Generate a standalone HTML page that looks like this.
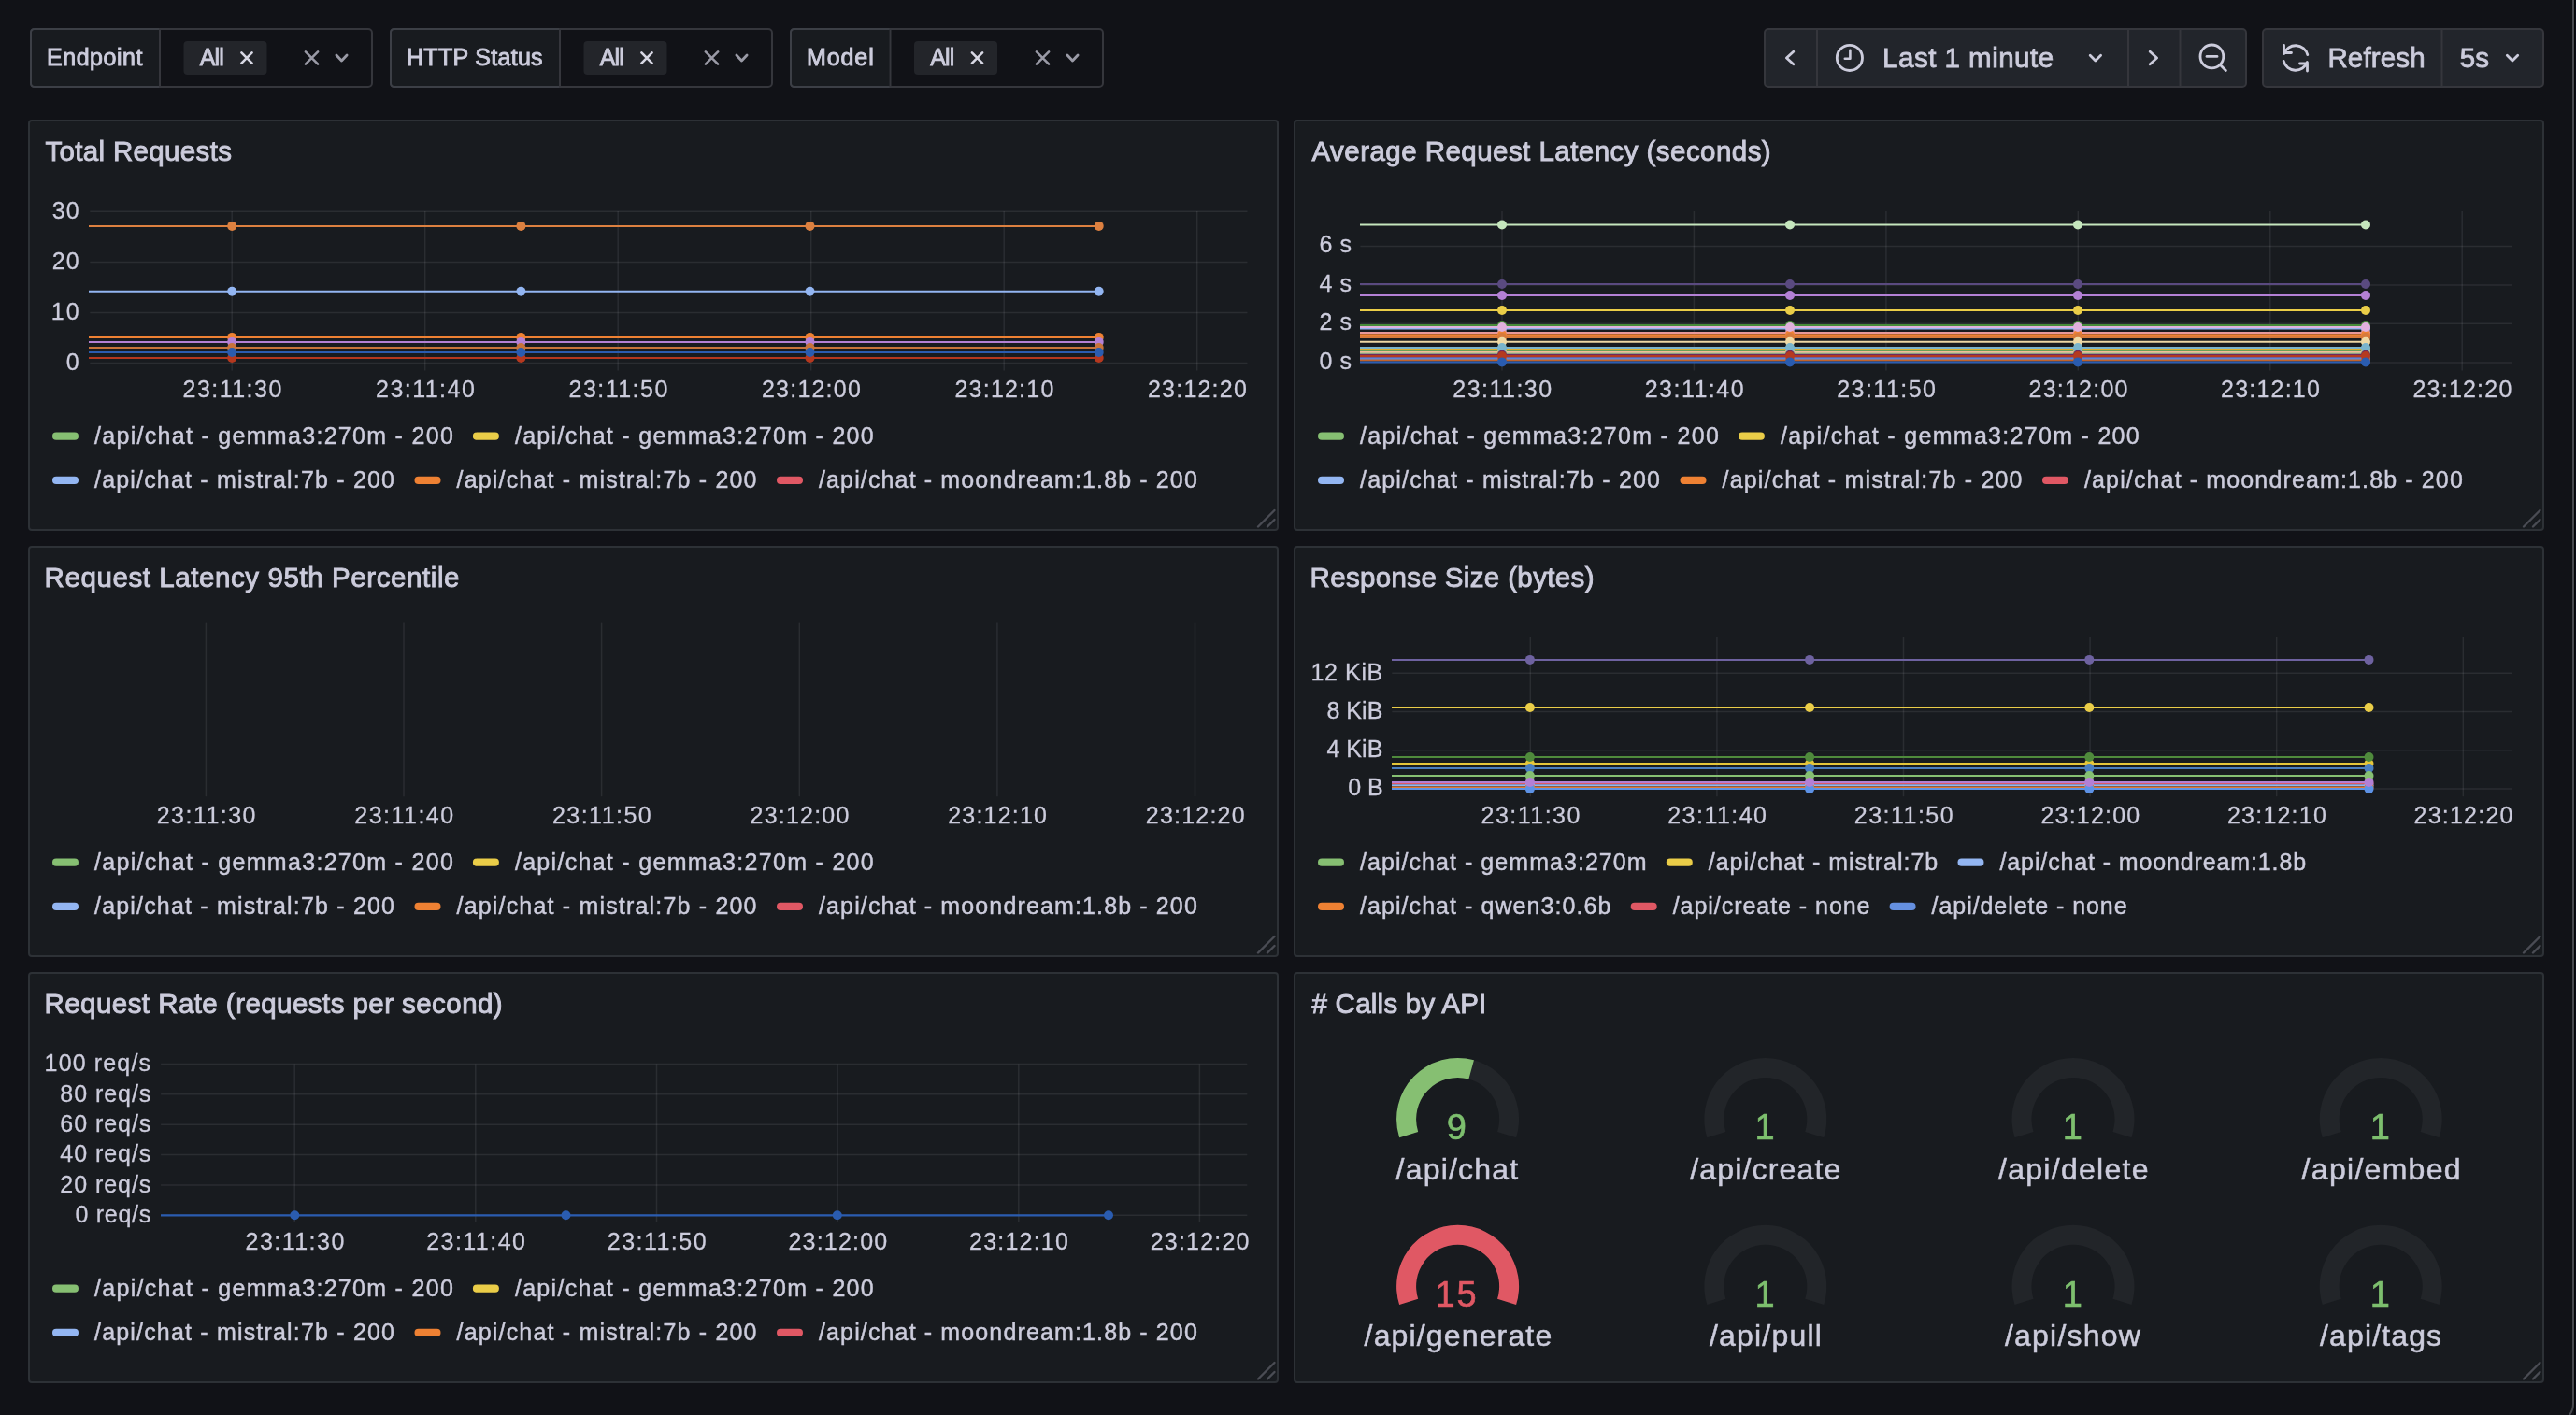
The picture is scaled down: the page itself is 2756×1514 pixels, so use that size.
<!DOCTYPE html><html><head><meta charset="utf-8"><title>Grafana</title><style>
html,body{margin:0;padding:0;width:2756px;height:1514px;overflow:hidden;background:#111217;}
svg{position:absolute;left:0;top:0;display:block;font-family:"Liberation Sans",sans-serif;will-change:transform;}
text{white-space:pre;}
</style></head><body>
<svg width="2756" height="1514" viewBox="0 0 2756 1514">
<rect x="33" y="31" width="365" height="62" fill="#111217" stroke="#35363c" stroke-width="2" rx="4" />
<path d="M37 32 H170 V92 H37 Q34 92 34 89 V35 Q34 32 37 32 Z" fill="#181b1f"/>
<path d="M170 31 H37 Q33 31 33 35 V89 Q33 93 37 93 H170" fill="none" stroke="#3c3f46" stroke-width="2"/>
<line x1="171.0" y1="31.0" x2="171.0" y2="93.0" stroke="#35363c" stroke-width="2" />
<text x="50.00" y="70.2" font-size="25" fill="#ccccdc" stroke="#ccccdc" stroke-width="0.9" textLength="102.40" lengthAdjust="spacing">Endpoint</text>
<rect x="196.5" y="44" width="89" height="36" fill="#23252a" stroke="none" stroke-width="0" rx="4" />
<text x="213.70" y="70.3" font-size="25" fill="#ccccdc" stroke="#ccccdc" stroke-width="0.8" textLength="26.00" lengthAdjust="spacing">All</text>
<path d="M258.4 56.4 L269.6 67.6 M258.4 67.6 L269.6 56.4" stroke="#d8d8e4" stroke-width="2.6" fill="none" stroke-linecap="round" stroke-linejoin="round"/>
<path d="M326.9 55.4 L340.1 68.6 M326.9 68.6 L340.1 55.4" stroke="#9a9aa6" stroke-width="2.6" fill="none" stroke-linecap="round" stroke-linejoin="round"/>
<path d="M359.9 59.0 L365.5 65.0 L371.1 59.0" stroke="#9a9aa6" stroke-width="2.8" fill="none" stroke-linecap="round" stroke-linejoin="round"/>
<rect x="418" y="31" width="408" height="62" fill="#111217" stroke="#35363c" stroke-width="2" rx="4" />
<path d="M422 32 H598 V92 H422 Q419 92 419 89 V35 Q419 32 422 32 Z" fill="#181b1f"/>
<path d="M598 31 H422 Q418 31 418 35 V89 Q418 93 422 93 H598" fill="none" stroke="#3c3f46" stroke-width="2"/>
<line x1="599.0" y1="31.0" x2="599.0" y2="93.0" stroke="#35363c" stroke-width="2" />
<text x="435.00" y="70.2" font-size="25" fill="#ccccdc" stroke="#ccccdc" stroke-width="0.9" textLength="145.60" lengthAdjust="spacing">HTTP Status</text>
<rect x="624.5" y="44" width="89" height="36" fill="#23252a" stroke="none" stroke-width="0" rx="4" />
<text x="641.70" y="70.3" font-size="25" fill="#ccccdc" stroke="#ccccdc" stroke-width="0.8" textLength="26.00" lengthAdjust="spacing">All</text>
<path d="M686.4 56.4 L697.6 67.6 M686.4 67.6 L697.6 56.4" stroke="#d8d8e4" stroke-width="2.6" fill="none" stroke-linecap="round" stroke-linejoin="round"/>
<path d="M754.9 55.4 L768.1 68.6 M754.9 68.6 L768.1 55.4" stroke="#9a9aa6" stroke-width="2.6" fill="none" stroke-linecap="round" stroke-linejoin="round"/>
<path d="M787.9 59.0 L793.5 65.0 L799.1 59.0" stroke="#9a9aa6" stroke-width="2.8" fill="none" stroke-linecap="round" stroke-linejoin="round"/>
<rect x="846" y="31" width="334" height="62" fill="#111217" stroke="#35363c" stroke-width="2" rx="4" />
<path d="M850 32 H951.5 V92 H850 Q847 92 847 89 V35 Q847 32 850 32 Z" fill="#181b1f"/>
<path d="M951.5 31 H850 Q846 31 846 35 V89 Q846 93 850 93 H951.5" fill="none" stroke="#3c3f46" stroke-width="2"/>
<line x1="952.5" y1="31.0" x2="952.5" y2="93.0" stroke="#35363c" stroke-width="2" />
<text x="863.10" y="70.2" font-size="25" fill="#ccccdc" stroke="#ccccdc" stroke-width="0.9" textLength="71.60" lengthAdjust="spacing">Model</text>
<rect x="978.0" y="44" width="89" height="36" fill="#23252a" stroke="none" stroke-width="0" rx="4" />
<text x="995.20" y="70.3" font-size="25" fill="#ccccdc" stroke="#ccccdc" stroke-width="0.8" textLength="26.00" lengthAdjust="spacing">All</text>
<path d="M1039.9 56.4 L1051.1 67.6 M1039.9 67.6 L1051.1 56.4" stroke="#d8d8e4" stroke-width="2.6" fill="none" stroke-linecap="round" stroke-linejoin="round"/>
<path d="M1108.9 55.4 L1122.1 68.6 M1108.9 68.6 L1122.1 55.4" stroke="#9a9aa6" stroke-width="2.6" fill="none" stroke-linecap="round" stroke-linejoin="round"/>
<path d="M1141.9 59.0 L1147.5 65.0 L1153.1 59.0" stroke="#9a9aa6" stroke-width="2.8" fill="none" stroke-linecap="round" stroke-linejoin="round"/>
<rect x="1888" y="31" width="515" height="62" fill="#22252b" stroke="#35363c" stroke-width="2" rx="4" />
<line x1="1944.0" y1="31.0" x2="1944.0" y2="93.0" stroke="#35363c" stroke-width="2" />
<line x1="2277.0" y1="31.0" x2="2277.0" y2="93.0" stroke="#35363c" stroke-width="2" />
<line x1="2332.5" y1="31.0" x2="2332.5" y2="93.0" stroke="#35363c" stroke-width="2" />
<path d="M1918.8 55.2 L1911.4 62 L1918.8 68.8" stroke="#ccccdc" stroke-width="2.8" fill="none" stroke-linecap="round" stroke-linejoin="round"/>
<circle cx="1978.9" cy="61.9" r="13.6" fill="none" stroke="#ccccdc" stroke-width="2.8"/>
<path d="M1979.4 53.8 V62.8 H1973.8" stroke="#ccccdc" stroke-width="2.6" fill="none" stroke-linecap="round" stroke-linejoin="round"/>
<text x="2014.10" y="72.4" font-size="29.5" fill="#ccccdc" stroke="#ccccdc" stroke-width="0.8" textLength="183.00" lengthAdjust="spacing">Last 1 minute</text>
<path d="M2236.2 59.3 L2241.9 64.9 L2247.6 59.3" stroke="#ccccdc" stroke-width="2.8" fill="none" stroke-linecap="round" stroke-linejoin="round"/>
<path d="M2300.2 55.2 L2307.6 62 L2300.2 68.8" stroke="#ccccdc" stroke-width="2.8" fill="none" stroke-linecap="round" stroke-linejoin="round"/>
<circle cx="2366.4" cy="60.4" r="12.4" fill="none" stroke="#ccccdc" stroke-width="2.8"/>
<line x1="2375.2" y1="69.2" x2="2381.4" y2="75.4" stroke="#ccccdc" stroke-width="2.8" stroke-linecap="round"/>
<line x1="2361.0" y1="60.4" x2="2372.0" y2="60.4" stroke="#ccccdc" stroke-width="2.8" stroke-linecap="round"/>
<rect x="2421" y="31" width="300" height="62" fill="#22252b" stroke="#35363c" stroke-width="2" rx="4" />
<line x1="2612.5" y1="31.0" x2="2612.5" y2="93.0" stroke="#35363c" stroke-width="2" />
<path d="M2443.6 57.5 A13.2 13.2 0 0 1 2468.8 58.6" stroke="#ccccdc" stroke-width="2.8" fill="none" stroke-linecap="round"/>
<path d="M2468.4 66.5 A13.2 13.2 0 0 1 2443.2 65.4" stroke="#ccccdc" stroke-width="2.8" fill="none" stroke-linecap="round"/>
<path d="M2443.5 48.5 V56.5 H2451.5" stroke="#ccccdc" stroke-width="2.8" fill="none" stroke-linecap="round" stroke-linejoin="round"/>
<path d="M2468.5 76 V68 H2460.5" stroke="#ccccdc" stroke-width="2.8" fill="none" stroke-linecap="round" stroke-linejoin="round"/>
<text x="2490.40" y="72.2" font-size="29.5" fill="#ccccdc" stroke="#ccccdc" stroke-width="0.8" textLength="104.20" lengthAdjust="spacing">Refresh</text>
<text x="2631.70" y="72.2" font-size="29.5" fill="#ccccdc" stroke="#ccccdc" stroke-width="0.8" textLength="31.20" lengthAdjust="spacing">5s</text>
<path d="M2682.3 59.3 L2688.0 64.9 L2693.7 59.3" stroke="#ccccdc" stroke-width="2.8" fill="none" stroke-linecap="round" stroke-linejoin="round"/>
<path d="M2753 0 V1502 A20 20 0 0 1 2733 1522" stroke="#46474d" stroke-width="2" fill="none" />
<rect x="2754" y="0" width="1" height="1514" fill="#050608" stroke="none" stroke-width="0" rx="0" />
<rect x="2755" y="0" width="1" height="1514" fill="#0b0c18" stroke="none" stroke-width="0" rx="0" />
<rect x="31" y="129" width="1336" height="438" fill="#181b1f" stroke="#2d3136" stroke-width="2" rx="3" />
<text x="48.50" y="172.1" font-size="29.5" fill="#ccccdc" stroke="#ccccdc" stroke-width="0.9" textLength="199.40" lengthAdjust="spacing">Total Requests</text>
<line x1="1346.0" y1="563.5" x2="1363.5" y2="546.0" stroke="#4a4c54" stroke-width="2.4" stroke-linecap="round"/>
<line x1="1356.0" y1="563.5" x2="1363.5" y2="556.0" stroke="#4a4c54" stroke-width="2.4" stroke-linecap="round"/>
<line x1="96.3" y1="226.3" x2="1334.5" y2="226.3" stroke="rgba(204,204,220,0.10)" stroke-width="1.5" />
<text x="55.80" y="233.6" font-size="25" fill="#ccccdc" stroke="#ccccdc" stroke-width="0.3" textLength="28.80" lengthAdjust="spacing">30</text>
<line x1="96.3" y1="280.4" x2="1334.5" y2="280.4" stroke="rgba(204,204,220,0.10)" stroke-width="1.5" />
<text x="55.80" y="287.7" font-size="25" fill="#ccccdc" stroke="#ccccdc" stroke-width="0.3" textLength="28.80" lengthAdjust="spacing">20</text>
<line x1="96.3" y1="334.6" x2="1334.5" y2="334.6" stroke="rgba(204,204,220,0.10)" stroke-width="1.5" />
<text x="54.80" y="341.9" font-size="25" fill="#ccccdc" stroke="#ccccdc" stroke-width="0.3" textLength="29.80" lengthAdjust="spacing">10</text>
<line x1="96.3" y1="388.4" x2="1334.5" y2="388.4" stroke="rgba(204,204,220,0.10)" stroke-width="1.5" />
<text x="70.80" y="395.7" font-size="25" fill="#ccccdc" stroke="#ccccdc" stroke-width="0.3" textLength="13.80" lengthAdjust="spacing">0</text>
<line x1="248.2" y1="226.0" x2="248.2" y2="396.5" stroke="rgba(204,204,220,0.10)" stroke-width="1.5" />
<text x="195.50" y="425.0" font-size="25" fill="#ccccdc" stroke="#ccccdc" stroke-width="0.3" textLength="105.80" lengthAdjust="spacing">23:11:30</text>
<line x1="454.7" y1="226.0" x2="454.7" y2="396.5" stroke="rgba(204,204,220,0.10)" stroke-width="1.5" />
<text x="402.00" y="425.0" font-size="25" fill="#ccccdc" stroke="#ccccdc" stroke-width="0.3" textLength="105.80" lengthAdjust="spacing">23:11:40</text>
<line x1="661.2" y1="226.0" x2="661.2" y2="396.5" stroke="rgba(204,204,220,0.10)" stroke-width="1.5" />
<text x="608.50" y="425.0" font-size="25" fill="#ccccdc" stroke="#ccccdc" stroke-width="0.3" textLength="105.80" lengthAdjust="spacing">23:11:50</text>
<line x1="867.7" y1="226.0" x2="867.7" y2="396.5" stroke="rgba(204,204,220,0.10)" stroke-width="1.5" />
<text x="815.00" y="425.0" font-size="25" fill="#ccccdc" stroke="#ccccdc" stroke-width="0.3" textLength="105.80" lengthAdjust="spacing">23:12:00</text>
<line x1="1074.2" y1="226.0" x2="1074.2" y2="396.5" stroke="rgba(204,204,220,0.10)" stroke-width="1.5" />
<text x="1021.50" y="425.0" font-size="25" fill="#ccccdc" stroke="#ccccdc" stroke-width="0.3" textLength="105.80" lengthAdjust="spacing">23:12:10</text>
<line x1="1280.7" y1="226.0" x2="1280.7" y2="396.5" stroke="rgba(204,204,220,0.10)" stroke-width="1.5" />
<text x="1228.00" y="425.0" font-size="25" fill="#ccccdc" stroke="#ccccdc" stroke-width="0.3" textLength="105.80" lengthAdjust="spacing">23:12:20</text>
<line x1="95.0" y1="241.9" x2="1175.7" y2="241.9" stroke="#dc8040" stroke-width="2" />
<circle cx="248.2" cy="241.9" r="5" fill="#dc8040"/>
<circle cx="557.4" cy="241.9" r="5" fill="#dc8040"/>
<circle cx="866.5" cy="241.9" r="5" fill="#dc8040"/>
<circle cx="1175.7" cy="241.9" r="5" fill="#dc8040"/>
<line x1="95.0" y1="311.7" x2="1175.7" y2="311.7" stroke="#93b6f2" stroke-width="2" />
<circle cx="248.2" cy="311.7" r="5" fill="#93b6f2"/>
<circle cx="557.4" cy="311.7" r="5" fill="#93b6f2"/>
<circle cx="866.5" cy="311.7" r="5" fill="#93b6f2"/>
<circle cx="1175.7" cy="311.7" r="5" fill="#93b6f2"/>
<line x1="95.0" y1="360.9" x2="1175.7" y2="360.9" stroke="#ee8133" stroke-width="2" />
<circle cx="248.2" cy="360.9" r="5" fill="#ee8133"/>
<circle cx="557.4" cy="360.9" r="5" fill="#ee8133"/>
<circle cx="866.5" cy="360.9" r="5" fill="#ee8133"/>
<circle cx="1175.7" cy="360.9" r="5" fill="#ee8133"/>
<line x1="95.0" y1="365.9" x2="1175.7" y2="365.9" stroke="#b380d5" stroke-width="2" />
<circle cx="248.2" cy="365.9" r="5" fill="#b380d5"/>
<circle cx="557.4" cy="365.9" r="5" fill="#b380d5"/>
<circle cx="866.5" cy="365.9" r="5" fill="#b380d5"/>
<circle cx="1175.7" cy="365.9" r="5" fill="#b380d5"/>
<line x1="95.0" y1="372.0" x2="1175.7" y2="372.0" stroke="#c8733a" stroke-width="2" />
<circle cx="248.2" cy="372.0" r="5" fill="#c8733a"/>
<circle cx="557.4" cy="372.0" r="5" fill="#c8733a"/>
<circle cx="866.5" cy="372.0" r="5" fill="#c8733a"/>
<circle cx="1175.7" cy="372.0" r="5" fill="#c8733a"/>
<line x1="95.0" y1="383.0" x2="1175.7" y2="383.0" stroke="#b5381f" stroke-width="2" />
<circle cx="248.2" cy="383.0" r="5" fill="#b5381f"/>
<circle cx="557.4" cy="383.0" r="5" fill="#b5381f"/>
<circle cx="866.5" cy="383.0" r="5" fill="#b5381f"/>
<circle cx="1175.7" cy="383.0" r="5" fill="#b5381f"/>
<line x1="95.0" y1="377.0" x2="1175.7" y2="377.0" stroke="#2a5cb0" stroke-width="2" />
<circle cx="248.2" cy="377.0" r="5" fill="#2a5cb0"/>
<circle cx="557.4" cy="377.0" r="5" fill="#2a5cb0"/>
<circle cx="866.5" cy="377.0" r="5" fill="#2a5cb0"/>
<circle cx="1175.7" cy="377.0" r="5" fill="#2a5cb0"/>
<rect x="56" y="462.6" width="28" height="8.2" fill="#86bf72" stroke="none" stroke-width="0" rx="4.1" />
<text x="101.00" y="474.8" font-size="25" fill="#ccccdc" stroke="#ccccdc" stroke-width="0.45" textLength="383.80" lengthAdjust="spacing">/api/chat - gemma3:270m - 200</text>
<rect x="505.9" y="462.6" width="28" height="8.2" fill="#eacd48" stroke="none" stroke-width="0" rx="4.1" />
<text x="550.90" y="474.8" font-size="25" fill="#ccccdc" stroke="#ccccdc" stroke-width="0.45" textLength="383.80" lengthAdjust="spacing">/api/chat - gemma3:270m - 200</text>
<rect x="56" y="509.8" width="28" height="8.2" fill="#93b6f2" stroke="none" stroke-width="0" rx="4.1" />
<text x="101.00" y="522.0" font-size="25" fill="#ccccdc" stroke="#ccccdc" stroke-width="0.45" textLength="321.00" lengthAdjust="spacing">/api/chat - mistral:7b - 200</text>
<rect x="443.5" y="509.8" width="28" height="8.2" fill="#ee8133" stroke="none" stroke-width="0" rx="4.1" />
<text x="488.50" y="522.0" font-size="25" fill="#ccccdc" stroke="#ccccdc" stroke-width="0.45" textLength="321.00" lengthAdjust="spacing">/api/chat - mistral:7b - 200</text>
<rect x="831.0" y="509.8" width="28" height="8.2" fill="#e05864" stroke="none" stroke-width="0" rx="4.1" />
<text x="876.00" y="522.0" font-size="25" fill="#ccccdc" stroke="#ccccdc" stroke-width="0.45" textLength="404.80" lengthAdjust="spacing">/api/chat - moondream:1.8b - 200</text>
<rect x="1385" y="129" width="1336" height="438" fill="#181b1f" stroke="#2d3136" stroke-width="2" rx="3" />
<text x="1403.50" y="172.1" font-size="29.5" fill="#ccccdc" stroke="#ccccdc" stroke-width="0.9" textLength="491.20" lengthAdjust="spacing">Average Request Latency (seconds)</text>
<line x1="2700.0" y1="563.5" x2="2717.5" y2="546.0" stroke="#4a4c54" stroke-width="2.4" stroke-linecap="round"/>
<line x1="2710.0" y1="563.5" x2="2717.5" y2="556.0" stroke="#4a4c54" stroke-width="2.4" stroke-linecap="round"/>
<line x1="1455.4" y1="263.5" x2="2687.6" y2="263.5" stroke="rgba(204,204,220,0.10)" stroke-width="1.5" />
<text x="1411.50" y="270.1" font-size="25" fill="#ccccdc" stroke="#ccccdc" stroke-width="0.3" textLength="34.40" lengthAdjust="spacing">6 s</text>
<line x1="1455.4" y1="305.0" x2="2687.6" y2="305.0" stroke="rgba(204,204,220,0.10)" stroke-width="1.5" />
<text x="1411.50" y="311.6" font-size="25" fill="#ccccdc" stroke="#ccccdc" stroke-width="0.3" textLength="34.40" lengthAdjust="spacing">4 s</text>
<line x1="1455.4" y1="346.2" x2="2687.6" y2="346.2" stroke="rgba(204,204,220,0.10)" stroke-width="1.5" />
<text x="1411.50" y="352.8" font-size="25" fill="#ccccdc" stroke="#ccccdc" stroke-width="0.3" textLength="34.40" lengthAdjust="spacing">2 s</text>
<line x1="1455.4" y1="388.0" x2="2687.6" y2="388.0" stroke="rgba(204,204,220,0.10)" stroke-width="1.5" />
<text x="1411.50" y="394.6" font-size="25" fill="#ccccdc" stroke="#ccccdc" stroke-width="0.3" textLength="34.40" lengthAdjust="spacing">0 s</text>
<line x1="1607.0" y1="226.0" x2="1607.0" y2="396.5" stroke="rgba(204,204,220,0.10)" stroke-width="1.5" />
<text x="1554.30" y="425.0" font-size="25" fill="#ccccdc" stroke="#ccccdc" stroke-width="0.3" textLength="105.80" lengthAdjust="spacing">23:11:30</text>
<line x1="1812.4" y1="226.0" x2="1812.4" y2="396.5" stroke="rgba(204,204,220,0.10)" stroke-width="1.5" />
<text x="1759.74" y="425.0" font-size="25" fill="#ccccdc" stroke="#ccccdc" stroke-width="0.3" textLength="105.80" lengthAdjust="spacing">23:11:40</text>
<line x1="2017.9" y1="226.0" x2="2017.9" y2="396.5" stroke="rgba(204,204,220,0.10)" stroke-width="1.5" />
<text x="1965.18" y="425.0" font-size="25" fill="#ccccdc" stroke="#ccccdc" stroke-width="0.3" textLength="105.80" lengthAdjust="spacing">23:11:50</text>
<line x1="2223.3" y1="226.0" x2="2223.3" y2="396.5" stroke="rgba(204,204,220,0.10)" stroke-width="1.5" />
<text x="2170.62" y="425.0" font-size="25" fill="#ccccdc" stroke="#ccccdc" stroke-width="0.3" textLength="105.80" lengthAdjust="spacing">23:12:00</text>
<line x1="2428.8" y1="226.0" x2="2428.8" y2="396.5" stroke="rgba(204,204,220,0.10)" stroke-width="1.5" />
<text x="2376.06" y="425.0" font-size="25" fill="#ccccdc" stroke="#ccccdc" stroke-width="0.3" textLength="105.80" lengthAdjust="spacing">23:12:10</text>
<line x1="2634.2" y1="226.0" x2="2634.2" y2="396.5" stroke="rgba(204,204,220,0.10)" stroke-width="1.5" />
<text x="2581.50" y="425.0" font-size="25" fill="#ccccdc" stroke="#ccccdc" stroke-width="0.3" textLength="105.80" lengthAdjust="spacing">23:12:20</text>
<line x1="1455.0" y1="240.5" x2="2531.0" y2="240.5" stroke="#c5e6bd" stroke-width="2" />
<circle cx="1607.0" cy="240.5" r="5" fill="#c5e6bd"/>
<circle cx="1915.0" cy="240.5" r="5" fill="#c5e6bd"/>
<circle cx="2223.0" cy="240.5" r="5" fill="#c5e6bd"/>
<circle cx="2531.0" cy="240.5" r="5" fill="#c5e6bd"/>
<line x1="1455.0" y1="304.0" x2="2531.0" y2="304.0" stroke="#5a4a80" stroke-width="2" />
<circle cx="1607.0" cy="304.0" r="5" fill="#5a4a80"/>
<circle cx="1915.0" cy="304.0" r="5" fill="#5a4a80"/>
<circle cx="2223.0" cy="304.0" r="5" fill="#5a4a80"/>
<circle cx="2531.0" cy="304.0" r="5" fill="#5a4a80"/>
<line x1="1455.0" y1="316.0" x2="2531.0" y2="316.0" stroke="#b380d5" stroke-width="2" />
<circle cx="1607.0" cy="316.0" r="5" fill="#b380d5"/>
<circle cx="1915.0" cy="316.0" r="5" fill="#b380d5"/>
<circle cx="2223.0" cy="316.0" r="5" fill="#b380d5"/>
<circle cx="2531.0" cy="316.0" r="5" fill="#b380d5"/>
<line x1="1455.0" y1="332.0" x2="2531.0" y2="332.0" stroke="#eacd48" stroke-width="2" />
<circle cx="1607.0" cy="332.0" r="5" fill="#eacd48"/>
<circle cx="1915.0" cy="332.0" r="5" fill="#eacd48"/>
<circle cx="2223.0" cy="332.0" r="5" fill="#eacd48"/>
<circle cx="2531.0" cy="332.0" r="5" fill="#eacd48"/>
<line x1="1455.0" y1="351.6" x2="2531.0" y2="351.6" stroke="#93b6f2" stroke-width="2" />
<circle cx="1607.0" cy="351.6" r="5" fill="#93b6f2"/>
<circle cx="1915.0" cy="351.6" r="5" fill="#93b6f2"/>
<circle cx="2223.0" cy="351.6" r="5" fill="#93b6f2"/>
<circle cx="2531.0" cy="351.6" r="5" fill="#93b6f2"/>
<line x1="1455.0" y1="356.0" x2="2531.0" y2="356.0" stroke="#e8999a" stroke-width="2" />
<circle cx="1607.0" cy="356.0" r="5" fill="#e8999a"/>
<circle cx="1915.0" cy="356.0" r="5" fill="#e8999a"/>
<circle cx="2223.0" cy="356.0" r="5" fill="#e8999a"/>
<circle cx="2531.0" cy="356.0" r="5" fill="#e8999a"/>
<line x1="1455.0" y1="358.2" x2="2531.0" y2="358.2" stroke="#ee8133" stroke-width="2" />
<circle cx="1607.0" cy="358.2" r="5" fill="#ee8133"/>
<circle cx="1915.0" cy="358.2" r="5" fill="#ee8133"/>
<circle cx="2223.0" cy="358.2" r="5" fill="#ee8133"/>
<circle cx="2531.0" cy="358.2" r="5" fill="#ee8133"/>
<line x1="1455.0" y1="348.0" x2="2531.0" y2="348.0" stroke="#468a3a" stroke-width="2" />
<circle cx="1607.0" cy="348.0" r="5" fill="#468a3a"/>
<circle cx="1915.0" cy="348.0" r="5" fill="#468a3a"/>
<circle cx="2223.0" cy="348.0" r="5" fill="#468a3a"/>
<circle cx="2531.0" cy="348.0" r="5" fill="#468a3a"/>
<line x1="1455.0" y1="350.0" x2="2531.0" y2="350.0" stroke="#e0b0dd" stroke-width="2" />
<circle cx="1607.0" cy="350.0" r="5" fill="#e0b0dd"/>
<circle cx="1915.0" cy="350.0" r="5" fill="#e0b0dd"/>
<circle cx="2223.0" cy="350.0" r="5" fill="#e0b0dd"/>
<circle cx="2531.0" cy="350.0" r="5" fill="#e0b0dd"/>
<line x1="1455.0" y1="361.0" x2="2531.0" y2="361.0" stroke="#d77a3c" stroke-width="2" />
<circle cx="1607.0" cy="361.0" r="5" fill="#d77a3c"/>
<circle cx="1915.0" cy="361.0" r="5" fill="#d77a3c"/>
<circle cx="2223.0" cy="361.0" r="5" fill="#d77a3c"/>
<circle cx="2531.0" cy="361.0" r="5" fill="#d77a3c"/>
<line x1="1455.0" y1="374.0" x2="2531.0" y2="374.0" stroke="#dcae2c" stroke-width="2" />
<circle cx="1607.0" cy="374.0" r="5" fill="#dcae2c"/>
<circle cx="1915.0" cy="374.0" r="5" fill="#dcae2c"/>
<circle cx="2223.0" cy="374.0" r="5" fill="#dcae2c"/>
<circle cx="2531.0" cy="374.0" r="5" fill="#dcae2c"/>
<line x1="1455.0" y1="375.5" x2="2531.0" y2="375.5" stroke="#6aa05a" stroke-width="2" />
<circle cx="1607.0" cy="375.5" r="5" fill="#6aa05a"/>
<circle cx="1915.0" cy="375.5" r="5" fill="#6aa05a"/>
<circle cx="2223.0" cy="375.5" r="5" fill="#6aa05a"/>
<circle cx="2531.0" cy="375.5" r="5" fill="#6aa05a"/>
<line x1="1455.0" y1="377.0" x2="2531.0" y2="377.0" stroke="#f0bd98" stroke-width="2" />
<circle cx="1607.0" cy="377.0" r="5" fill="#f0bd98"/>
<circle cx="1915.0" cy="377.0" r="5" fill="#f0bd98"/>
<circle cx="2223.0" cy="377.0" r="5" fill="#f0bd98"/>
<circle cx="2531.0" cy="377.0" r="5" fill="#f0bd98"/>
<line x1="1455.0" y1="378.6" x2="2531.0" y2="378.6" stroke="#9cc38d" stroke-width="2" />
<circle cx="1607.0" cy="378.6" r="5" fill="#9cc38d"/>
<circle cx="1915.0" cy="378.6" r="5" fill="#9cc38d"/>
<circle cx="2223.0" cy="378.6" r="5" fill="#9cc38d"/>
<circle cx="2531.0" cy="378.6" r="5" fill="#9cc38d"/>
<line x1="1455.0" y1="365.8" x2="2531.0" y2="365.8" stroke="#efd9a4" stroke-width="2" />
<circle cx="1607.0" cy="365.8" r="5" fill="#efd9a4"/>
<circle cx="1915.0" cy="365.8" r="5" fill="#efd9a4"/>
<circle cx="2223.0" cy="365.8" r="5" fill="#efd9a4"/>
<circle cx="2531.0" cy="365.8" r="5" fill="#efd9a4"/>
<line x1="1455.0" y1="372.0" x2="2531.0" y2="372.0" stroke="#7ab4cc" stroke-width="2" />
<circle cx="1607.0" cy="372.0" r="5" fill="#7ab4cc"/>
<circle cx="1915.0" cy="372.0" r="5" fill="#7ab4cc"/>
<circle cx="2223.0" cy="372.0" r="5" fill="#7ab4cc"/>
<circle cx="2531.0" cy="372.0" r="5" fill="#7ab4cc"/>
<line x1="1455.0" y1="379.8" x2="2531.0" y2="379.8" stroke="#6d2a60" stroke-width="2" />
<circle cx="1607.0" cy="379.8" r="5" fill="#6d2a60"/>
<circle cx="1915.0" cy="379.8" r="5" fill="#6d2a60"/>
<circle cx="2223.0" cy="379.8" r="5" fill="#6d2a60"/>
<circle cx="2531.0" cy="379.8" r="5" fill="#6d2a60"/>
<line x1="1455.0" y1="383.0" x2="2531.0" y2="383.0" stroke="#6e62a0" stroke-width="2" />
<circle cx="1607.0" cy="383.0" r="5" fill="#6e62a0"/>
<circle cx="1915.0" cy="383.0" r="5" fill="#6e62a0"/>
<circle cx="2223.0" cy="383.0" r="5" fill="#6e62a0"/>
<circle cx="2531.0" cy="383.0" r="5" fill="#6e62a0"/>
<line x1="1455.0" y1="384.3" x2="2531.0" y2="384.3" stroke="#5d92e6" stroke-width="2" />
<circle cx="1607.0" cy="384.3" r="5" fill="#5d92e6"/>
<circle cx="1915.0" cy="384.3" r="5" fill="#5d92e6"/>
<circle cx="2223.0" cy="384.3" r="5" fill="#5d92e6"/>
<circle cx="2531.0" cy="384.3" r="5" fill="#5d92e6"/>
<line x1="1455.0" y1="385.5" x2="2531.0" y2="385.5" stroke="#c0622a" stroke-width="2" />
<circle cx="1607.0" cy="385.5" r="5" fill="#c0622a"/>
<circle cx="1915.0" cy="385.5" r="5" fill="#c0622a"/>
<circle cx="2223.0" cy="385.5" r="5" fill="#c0622a"/>
<circle cx="2531.0" cy="385.5" r="5" fill="#c0622a"/>
<line x1="1455.0" y1="381.0" x2="2531.0" y2="381.0" stroke="#b53a1f" stroke-width="2" />
<circle cx="1607.0" cy="381.0" r="5" fill="#b53a1f"/>
<circle cx="1915.0" cy="381.0" r="5" fill="#b53a1f"/>
<circle cx="2223.0" cy="381.0" r="5" fill="#b53a1f"/>
<circle cx="2531.0" cy="381.0" r="5" fill="#b53a1f"/>
<line x1="1455.0" y1="387.4" x2="2531.0" y2="387.4" stroke="#2a5cb0" stroke-width="2" />
<circle cx="1607.0" cy="387.4" r="5" fill="#2a5cb0"/>
<circle cx="1915.0" cy="387.4" r="5" fill="#2a5cb0"/>
<circle cx="2223.0" cy="387.4" r="5" fill="#2a5cb0"/>
<circle cx="2531.0" cy="387.4" r="5" fill="#2a5cb0"/>
<rect x="1410" y="462.6" width="28" height="8.2" fill="#86bf72" stroke="none" stroke-width="0" rx="4.1" />
<text x="1455.00" y="474.8" font-size="25" fill="#ccccdc" stroke="#ccccdc" stroke-width="0.45" textLength="383.80" lengthAdjust="spacing">/api/chat - gemma3:270m - 200</text>
<rect x="1859.9" y="462.6" width="28" height="8.2" fill="#eacd48" stroke="none" stroke-width="0" rx="4.1" />
<text x="1904.90" y="474.8" font-size="25" fill="#ccccdc" stroke="#ccccdc" stroke-width="0.45" textLength="383.80" lengthAdjust="spacing">/api/chat - gemma3:270m - 200</text>
<rect x="1410" y="509.8" width="28" height="8.2" fill="#93b6f2" stroke="none" stroke-width="0" rx="4.1" />
<text x="1455.00" y="522.0" font-size="25" fill="#ccccdc" stroke="#ccccdc" stroke-width="0.45" textLength="321.00" lengthAdjust="spacing">/api/chat - mistral:7b - 200</text>
<rect x="1797.5" y="509.8" width="28" height="8.2" fill="#ee8133" stroke="none" stroke-width="0" rx="4.1" />
<text x="1842.50" y="522.0" font-size="25" fill="#ccccdc" stroke="#ccccdc" stroke-width="0.45" textLength="321.00" lengthAdjust="spacing">/api/chat - mistral:7b - 200</text>
<rect x="2185.0" y="509.8" width="28" height="8.2" fill="#e05864" stroke="none" stroke-width="0" rx="4.1" />
<text x="2230.00" y="522.0" font-size="25" fill="#ccccdc" stroke="#ccccdc" stroke-width="0.45" textLength="404.80" lengthAdjust="spacing">/api/chat - moondream:1.8b - 200</text>
<rect x="31" y="585" width="1336" height="438" fill="#181b1f" stroke="#2d3136" stroke-width="2" rx="3" />
<text x="47.50" y="628.1" font-size="29.5" fill="#ccccdc" stroke="#ccccdc" stroke-width="0.9" textLength="444.00" lengthAdjust="spacing">Request Latency 95th Percentile</text>
<line x1="1346.0" y1="1019.5" x2="1363.5" y2="1002.0" stroke="#4a4c54" stroke-width="2.4" stroke-linecap="round"/>
<line x1="1356.0" y1="1019.5" x2="1363.5" y2="1012.0" stroke="#4a4c54" stroke-width="2.4" stroke-linecap="round"/>
<line x1="220.4" y1="666.6" x2="220.4" y2="852.2" stroke="rgba(204,204,220,0.10)" stroke-width="1.5" />
<text x="167.70" y="881.0" font-size="25" fill="#ccccdc" stroke="#ccccdc" stroke-width="0.3" textLength="105.80" lengthAdjust="spacing">23:11:30</text>
<line x1="432.0" y1="666.6" x2="432.0" y2="852.2" stroke="rgba(204,204,220,0.10)" stroke-width="1.5" />
<text x="379.32" y="881.0" font-size="25" fill="#ccccdc" stroke="#ccccdc" stroke-width="0.3" textLength="105.80" lengthAdjust="spacing">23:11:40</text>
<line x1="643.6" y1="666.6" x2="643.6" y2="852.2" stroke="rgba(204,204,220,0.10)" stroke-width="1.5" />
<text x="590.94" y="881.0" font-size="25" fill="#ccccdc" stroke="#ccccdc" stroke-width="0.3" textLength="105.80" lengthAdjust="spacing">23:11:50</text>
<line x1="855.3" y1="666.6" x2="855.3" y2="852.2" stroke="rgba(204,204,220,0.10)" stroke-width="1.5" />
<text x="802.56" y="881.0" font-size="25" fill="#ccccdc" stroke="#ccccdc" stroke-width="0.3" textLength="105.80" lengthAdjust="spacing">23:12:00</text>
<line x1="1066.9" y1="666.6" x2="1066.9" y2="852.2" stroke="rgba(204,204,220,0.10)" stroke-width="1.5" />
<text x="1014.18" y="881.0" font-size="25" fill="#ccccdc" stroke="#ccccdc" stroke-width="0.3" textLength="105.80" lengthAdjust="spacing">23:12:10</text>
<line x1="1278.5" y1="666.6" x2="1278.5" y2="852.2" stroke="rgba(204,204,220,0.10)" stroke-width="1.5" />
<text x="1225.80" y="881.0" font-size="25" fill="#ccccdc" stroke="#ccccdc" stroke-width="0.3" textLength="105.80" lengthAdjust="spacing">23:12:20</text>
<rect x="56" y="918.5999999999999" width="28" height="8.2" fill="#86bf72" stroke="none" stroke-width="0" rx="4.1" />
<text x="101.00" y="930.8" font-size="25" fill="#ccccdc" stroke="#ccccdc" stroke-width="0.45" textLength="383.80" lengthAdjust="spacing">/api/chat - gemma3:270m - 200</text>
<rect x="505.9" y="918.5999999999999" width="28" height="8.2" fill="#eacd48" stroke="none" stroke-width="0" rx="4.1" />
<text x="550.90" y="930.8" font-size="25" fill="#ccccdc" stroke="#ccccdc" stroke-width="0.45" textLength="383.80" lengthAdjust="spacing">/api/chat - gemma3:270m - 200</text>
<rect x="56" y="965.8" width="28" height="8.2" fill="#93b6f2" stroke="none" stroke-width="0" rx="4.1" />
<text x="101.00" y="978.0" font-size="25" fill="#ccccdc" stroke="#ccccdc" stroke-width="0.45" textLength="321.00" lengthAdjust="spacing">/api/chat - mistral:7b - 200</text>
<rect x="443.5" y="965.8" width="28" height="8.2" fill="#ee8133" stroke="none" stroke-width="0" rx="4.1" />
<text x="488.50" y="978.0" font-size="25" fill="#ccccdc" stroke="#ccccdc" stroke-width="0.45" textLength="321.00" lengthAdjust="spacing">/api/chat - mistral:7b - 200</text>
<rect x="831.0" y="965.8" width="28" height="8.2" fill="#e05864" stroke="none" stroke-width="0" rx="4.1" />
<text x="876.00" y="978.0" font-size="25" fill="#ccccdc" stroke="#ccccdc" stroke-width="0.45" textLength="404.80" lengthAdjust="spacing">/api/chat - moondream:1.8b - 200</text>
<rect x="1385" y="585" width="1336" height="438" fill="#181b1f" stroke="#2d3136" stroke-width="2" rx="3" />
<text x="1401.50" y="628.1" font-size="29.5" fill="#ccccdc" stroke="#ccccdc" stroke-width="0.9" textLength="304.00" lengthAdjust="spacing">Response Size (bytes)</text>
<line x1="2700.0" y1="1019.5" x2="2717.5" y2="1002.0" stroke="#4a4c54" stroke-width="2.4" stroke-linecap="round"/>
<line x1="2710.0" y1="1019.5" x2="2717.5" y2="1012.0" stroke="#4a4c54" stroke-width="2.4" stroke-linecap="round"/>
<line x1="1489.3" y1="720.2" x2="2687.2" y2="720.2" stroke="rgba(204,204,220,0.10)" stroke-width="1.5" />
<text x="1402.50" y="727.5" font-size="25" fill="#ccccdc" stroke="#ccccdc" stroke-width="0.3" textLength="76.80" lengthAdjust="spacing">12 KiB</text>
<line x1="1489.3" y1="761.4" x2="2687.2" y2="761.4" stroke="rgba(204,204,220,0.10)" stroke-width="1.5" />
<text x="1419.40" y="768.7" font-size="25" fill="#ccccdc" stroke="#ccccdc" stroke-width="0.3" textLength="60.00" lengthAdjust="spacing">8 KiB</text>
<line x1="1489.3" y1="802.7" x2="2687.2" y2="802.7" stroke="rgba(204,204,220,0.10)" stroke-width="1.5" />
<text x="1419.40" y="810.0" font-size="25" fill="#ccccdc" stroke="#ccccdc" stroke-width="0.3" textLength="60.00" lengthAdjust="spacing">4 KiB</text>
<line x1="1489.3" y1="844.0" x2="2687.2" y2="844.0" stroke="rgba(204,204,220,0.10)" stroke-width="1.5" />
<text x="1442.20" y="851.3" font-size="25" fill="#ccccdc" stroke="#ccccdc" stroke-width="0.3" textLength="37.40" lengthAdjust="spacing">0 B</text>
<line x1="1637.3" y1="682.0" x2="1637.3" y2="852.2" stroke="rgba(204,204,220,0.10)" stroke-width="1.5" />
<text x="1584.60" y="881.0" font-size="25" fill="#ccccdc" stroke="#ccccdc" stroke-width="0.3" textLength="105.80" lengthAdjust="spacing">23:11:30</text>
<line x1="1836.9" y1="682.0" x2="1836.9" y2="852.2" stroke="rgba(204,204,220,0.10)" stroke-width="1.5" />
<text x="1784.20" y="881.0" font-size="25" fill="#ccccdc" stroke="#ccccdc" stroke-width="0.3" textLength="105.80" lengthAdjust="spacing">23:11:40</text>
<line x1="2036.5" y1="682.0" x2="2036.5" y2="852.2" stroke="rgba(204,204,220,0.10)" stroke-width="1.5" />
<text x="1983.80" y="881.0" font-size="25" fill="#ccccdc" stroke="#ccccdc" stroke-width="0.3" textLength="105.80" lengthAdjust="spacing">23:11:50</text>
<line x1="2236.1" y1="682.0" x2="2236.1" y2="852.2" stroke="rgba(204,204,220,0.10)" stroke-width="1.5" />
<text x="2183.40" y="881.0" font-size="25" fill="#ccccdc" stroke="#ccccdc" stroke-width="0.3" textLength="105.80" lengthAdjust="spacing">23:12:00</text>
<line x1="2435.7" y1="682.0" x2="2435.7" y2="852.2" stroke="rgba(204,204,220,0.10)" stroke-width="1.5" />
<text x="2383.00" y="881.0" font-size="25" fill="#ccccdc" stroke="#ccccdc" stroke-width="0.3" textLength="105.80" lengthAdjust="spacing">23:12:10</text>
<line x1="2635.3" y1="682.0" x2="2635.3" y2="852.2" stroke="rgba(204,204,220,0.10)" stroke-width="1.5" />
<text x="2582.60" y="881.0" font-size="25" fill="#ccccdc" stroke="#ccccdc" stroke-width="0.3" textLength="105.80" lengthAdjust="spacing">23:12:20</text>
<line x1="1489.0" y1="705.9" x2="2534.5" y2="705.9" stroke="#6e62a0" stroke-width="2" />
<circle cx="1636.9" cy="705.9" r="5" fill="#6e62a0"/>
<circle cx="1936.1" cy="705.9" r="5" fill="#6e62a0"/>
<circle cx="2235.3" cy="705.9" r="5" fill="#6e62a0"/>
<circle cx="2534.5" cy="705.9" r="5" fill="#6e62a0"/>
<line x1="1489.0" y1="757.0" x2="2534.5" y2="757.0" stroke="#eacd48" stroke-width="2" />
<circle cx="1636.9" cy="757.0" r="5" fill="#eacd48"/>
<circle cx="1936.1" cy="757.0" r="5" fill="#eacd48"/>
<circle cx="2235.3" cy="757.0" r="5" fill="#eacd48"/>
<circle cx="2534.5" cy="757.0" r="5" fill="#eacd48"/>
<line x1="1489.0" y1="817.1" x2="2534.5" y2="817.1" stroke="#e5c53a" stroke-width="2" />
<circle cx="1636.9" cy="817.1" r="5" fill="#e5c53a"/>
<circle cx="1936.1" cy="817.1" r="5" fill="#e5c53a"/>
<circle cx="2235.3" cy="817.1" r="5" fill="#e5c53a"/>
<circle cx="2534.5" cy="817.1" r="5" fill="#e5c53a"/>
<line x1="1489.0" y1="810.0" x2="2534.5" y2="810.0" stroke="#4f8a3c" stroke-width="2" />
<circle cx="1636.9" cy="810.0" r="5" fill="#4f8a3c"/>
<circle cx="1936.1" cy="810.0" r="5" fill="#4f8a3c"/>
<circle cx="2235.3" cy="810.0" r="5" fill="#4f8a3c"/>
<circle cx="2534.5" cy="810.0" r="5" fill="#4f8a3c"/>
<line x1="1489.0" y1="822.0" x2="2534.5" y2="822.0" stroke="#4a7ec0" stroke-width="2" />
<circle cx="1636.9" cy="822.0" r="5" fill="#4a7ec0"/>
<circle cx="1936.1" cy="822.0" r="5" fill="#4a7ec0"/>
<circle cx="2235.3" cy="822.0" r="5" fill="#4a7ec0"/>
<circle cx="2534.5" cy="822.0" r="5" fill="#4a7ec0"/>
<line x1="1489.0" y1="830.1" x2="2534.5" y2="830.1" stroke="#86bf72" stroke-width="2" />
<circle cx="1636.9" cy="830.1" r="5" fill="#86bf72"/>
<circle cx="1936.1" cy="830.1" r="5" fill="#86bf72"/>
<circle cx="2235.3" cy="830.1" r="5" fill="#86bf72"/>
<circle cx="2534.5" cy="830.1" r="5" fill="#86bf72"/>
<line x1="1489.0" y1="838.2" x2="2534.5" y2="838.2" stroke="#e05864" stroke-width="2" />
<circle cx="1636.9" cy="838.2" r="5" fill="#e05864"/>
<circle cx="1936.1" cy="838.2" r="5" fill="#e05864"/>
<circle cx="2235.3" cy="838.2" r="5" fill="#e05864"/>
<circle cx="2534.5" cy="838.2" r="5" fill="#e05864"/>
<line x1="1489.0" y1="840.2" x2="2534.5" y2="840.2" stroke="#93b6f2" stroke-width="2" />
<circle cx="1636.9" cy="840.2" r="5" fill="#93b6f2"/>
<circle cx="1936.1" cy="840.2" r="5" fill="#93b6f2"/>
<circle cx="2235.3" cy="840.2" r="5" fill="#93b6f2"/>
<circle cx="2534.5" cy="840.2" r="5" fill="#93b6f2"/>
<line x1="1489.0" y1="842.4" x2="2534.5" y2="842.4" stroke="#e07a35" stroke-width="2" />
<circle cx="1636.9" cy="842.4" r="5" fill="#e07a35"/>
<circle cx="1936.1" cy="842.4" r="5" fill="#e07a35"/>
<circle cx="2235.3" cy="842.4" r="5" fill="#e07a35"/>
<circle cx="2534.5" cy="842.4" r="5" fill="#e07a35"/>
<line x1="1489.0" y1="844.1" x2="2534.5" y2="844.1" stroke="#5d92e6" stroke-width="2" />
<circle cx="1636.9" cy="844.1" r="5" fill="#5d92e6"/>
<circle cx="1936.1" cy="844.1" r="5" fill="#5d92e6"/>
<circle cx="2235.3" cy="844.1" r="5" fill="#5d92e6"/>
<circle cx="2534.5" cy="844.1" r="5" fill="#5d92e6"/>
<line x1="1489.0" y1="836.9" x2="2534.5" y2="836.9" stroke="#b380d5" stroke-width="2" />
<circle cx="1636.9" cy="836.9" r="5" fill="#b380d5"/>
<circle cx="1936.1" cy="836.9" r="5" fill="#b380d5"/>
<circle cx="2235.3" cy="836.9" r="5" fill="#b380d5"/>
<circle cx="2534.5" cy="836.9" r="5" fill="#b380d5"/>
<rect x="1410" y="918.5999999999999" width="28" height="8.2" fill="#86bf72" stroke="none" stroke-width="0" rx="4.1" />
<text x="1455.00" y="930.8" font-size="25" fill="#ccccdc" stroke="#ccccdc" stroke-width="0.45" textLength="306.60" lengthAdjust="spacing">/api/chat - gemma3:270m</text>
<rect x="1782.8" y="918.5999999999999" width="28" height="8.2" fill="#eacd48" stroke="none" stroke-width="0" rx="4.1" />
<text x="1827.80" y="930.8" font-size="25" fill="#ccccdc" stroke="#ccccdc" stroke-width="0.45" textLength="245.40" lengthAdjust="spacing">/api/chat - mistral:7b</text>
<rect x="2094.5" y="918.5999999999999" width="28" height="8.2" fill="#93b6f2" stroke="none" stroke-width="0" rx="4.1" />
<text x="2139.50" y="930.8" font-size="25" fill="#ccccdc" stroke="#ccccdc" stroke-width="0.45" textLength="327.60" lengthAdjust="spacing">/api/chat - moondream:1.8b</text>
<rect x="1410" y="965.8" width="28" height="8.2" fill="#ee8133" stroke="none" stroke-width="0" rx="4.1" />
<text x="1455.00" y="978.0" font-size="25" fill="#ccccdc" stroke="#ccccdc" stroke-width="0.45" textLength="268.40" lengthAdjust="spacing">/api/chat - qwen3:0.6b</text>
<rect x="1744.7" y="965.8" width="28" height="8.2" fill="#e05864" stroke="none" stroke-width="0" rx="4.1" />
<text x="1789.70" y="978.0" font-size="25" fill="#ccccdc" stroke="#ccccdc" stroke-width="0.45" textLength="210.80" lengthAdjust="spacing">/api/create - none</text>
<rect x="2021.6000000000001" y="965.8" width="28" height="8.2" fill="#6590e0" stroke="none" stroke-width="0" rx="4.1" />
<text x="2066.60" y="978.0" font-size="25" fill="#ccccdc" stroke="#ccccdc" stroke-width="0.45" textLength="209.00" lengthAdjust="spacing">/api/delete - none</text>
<rect x="31" y="1041" width="1336" height="438" fill="#181b1f" stroke="#2d3136" stroke-width="2" rx="3" />
<text x="47.50" y="1084.1" font-size="29.5" fill="#ccccdc" stroke="#ccccdc" stroke-width="0.9" textLength="490.20" lengthAdjust="spacing">Request Rate (requests per second)</text>
<line x1="1346.0" y1="1475.5" x2="1363.5" y2="1458.0" stroke="#4a4c54" stroke-width="2.4" stroke-linecap="round"/>
<line x1="1356.0" y1="1475.5" x2="1363.5" y2="1468.0" stroke="#4a4c54" stroke-width="2.4" stroke-linecap="round"/>
<line x1="172.1" y1="1138.4" x2="1334.3" y2="1138.4" stroke="rgba(204,204,220,0.10)" stroke-width="1.5" />
<text x="47.60" y="1146.3" font-size="25" fill="#ccccdc" stroke="#ccccdc" stroke-width="0.3" textLength="113.40" lengthAdjust="spacing">100 req/s</text>
<line x1="172.1" y1="1170.8" x2="1334.3" y2="1170.8" stroke="rgba(204,204,220,0.10)" stroke-width="1.5" />
<text x="64.30" y="1178.7" font-size="25" fill="#ccccdc" stroke="#ccccdc" stroke-width="0.3" textLength="97.00" lengthAdjust="spacing">80 req/s</text>
<line x1="172.1" y1="1203.2" x2="1334.3" y2="1203.2" stroke="rgba(204,204,220,0.10)" stroke-width="1.5" />
<text x="64.30" y="1211.1" font-size="25" fill="#ccccdc" stroke="#ccccdc" stroke-width="0.3" textLength="97.00" lengthAdjust="spacing">60 req/s</text>
<line x1="172.1" y1="1235.5" x2="1334.3" y2="1235.5" stroke="rgba(204,204,220,0.10)" stroke-width="1.5" />
<text x="64.30" y="1243.4" font-size="25" fill="#ccccdc" stroke="#ccccdc" stroke-width="0.3" textLength="97.00" lengthAdjust="spacing">40 req/s</text>
<line x1="172.1" y1="1267.9" x2="1334.3" y2="1267.9" stroke="rgba(204,204,220,0.10)" stroke-width="1.5" />
<text x="64.30" y="1275.8" font-size="25" fill="#ccccdc" stroke="#ccccdc" stroke-width="0.3" textLength="97.00" lengthAdjust="spacing">20 req/s</text>
<line x1="172.1" y1="1300.3" x2="1334.3" y2="1300.3" stroke="rgba(204,204,220,0.10)" stroke-width="1.5" />
<text x="80.40" y="1308.2" font-size="25" fill="#ccccdc" stroke="#ccccdc" stroke-width="0.3" textLength="80.80" lengthAdjust="spacing">0 req/s</text>
<line x1="315.2" y1="1138.4" x2="315.2" y2="1308.0" stroke="rgba(204,204,220,0.10)" stroke-width="1.5" />
<text x="262.50" y="1337.0" font-size="25" fill="#ccccdc" stroke="#ccccdc" stroke-width="0.3" textLength="105.80" lengthAdjust="spacing">23:11:30</text>
<line x1="508.8" y1="1138.4" x2="508.8" y2="1308.0" stroke="rgba(204,204,220,0.10)" stroke-width="1.5" />
<text x="456.14" y="1337.0" font-size="25" fill="#ccccdc" stroke="#ccccdc" stroke-width="0.3" textLength="105.80" lengthAdjust="spacing">23:11:40</text>
<line x1="702.5" y1="1138.4" x2="702.5" y2="1308.0" stroke="rgba(204,204,220,0.10)" stroke-width="1.5" />
<text x="649.78" y="1337.0" font-size="25" fill="#ccccdc" stroke="#ccccdc" stroke-width="0.3" textLength="105.80" lengthAdjust="spacing">23:11:50</text>
<line x1="896.1" y1="1138.4" x2="896.1" y2="1308.0" stroke="rgba(204,204,220,0.10)" stroke-width="1.5" />
<text x="843.42" y="1337.0" font-size="25" fill="#ccccdc" stroke="#ccccdc" stroke-width="0.3" textLength="105.80" lengthAdjust="spacing">23:12:00</text>
<line x1="1089.8" y1="1138.4" x2="1089.8" y2="1308.0" stroke="rgba(204,204,220,0.10)" stroke-width="1.5" />
<text x="1037.06" y="1337.0" font-size="25" fill="#ccccdc" stroke="#ccccdc" stroke-width="0.3" textLength="105.80" lengthAdjust="spacing">23:12:10</text>
<line x1="1283.4" y1="1138.4" x2="1283.4" y2="1308.0" stroke="rgba(204,204,220,0.10)" stroke-width="1.5" />
<text x="1230.70" y="1337.0" font-size="25" fill="#ccccdc" stroke="#ccccdc" stroke-width="0.3" textLength="105.80" lengthAdjust="spacing">23:12:20</text>
<line x1="172.0" y1="1300.3" x2="1186.0" y2="1300.3" stroke="#2a5cb0" stroke-width="2.2" />
<circle cx="315.3" cy="1300.3" r="5" fill="#2a5cb0"/>
<circle cx="605.5" cy="1300.3" r="5" fill="#2a5cb0"/>
<circle cx="895.8" cy="1300.3" r="5" fill="#2a5cb0"/>
<circle cx="1186.0" cy="1300.3" r="5" fill="#2a5cb0"/>
<rect x="56" y="1374.6" width="28" height="8.2" fill="#86bf72" stroke="none" stroke-width="0" rx="4.1" />
<text x="101.00" y="1386.8" font-size="25" fill="#ccccdc" stroke="#ccccdc" stroke-width="0.45" textLength="383.80" lengthAdjust="spacing">/api/chat - gemma3:270m - 200</text>
<rect x="505.9" y="1374.6" width="28" height="8.2" fill="#eacd48" stroke="none" stroke-width="0" rx="4.1" />
<text x="550.90" y="1386.8" font-size="25" fill="#ccccdc" stroke="#ccccdc" stroke-width="0.45" textLength="383.80" lengthAdjust="spacing">/api/chat - gemma3:270m - 200</text>
<rect x="56" y="1421.8" width="28" height="8.2" fill="#93b6f2" stroke="none" stroke-width="0" rx="4.1" />
<text x="101.00" y="1434.0" font-size="25" fill="#ccccdc" stroke="#ccccdc" stroke-width="0.45" textLength="321.00" lengthAdjust="spacing">/api/chat - mistral:7b - 200</text>
<rect x="443.5" y="1421.8" width="28" height="8.2" fill="#ee8133" stroke="none" stroke-width="0" rx="4.1" />
<text x="488.50" y="1434.0" font-size="25" fill="#ccccdc" stroke="#ccccdc" stroke-width="0.45" textLength="321.00" lengthAdjust="spacing">/api/chat - mistral:7b - 200</text>
<rect x="831.0" y="1421.8" width="28" height="8.2" fill="#e05864" stroke="none" stroke-width="0" rx="4.1" />
<text x="876.00" y="1434.0" font-size="25" fill="#ccccdc" stroke="#ccccdc" stroke-width="0.45" textLength="404.80" lengthAdjust="spacing">/api/chat - moondream:1.8b - 200</text>
<rect x="1385" y="1041" width="1336" height="438" fill="#181b1f" stroke="#2d3136" stroke-width="2" rx="3" />
<text x="1403.50" y="1084.1" font-size="29.5" fill="#ccccdc" stroke="#ccccdc" stroke-width="0.9" textLength="186.80" lengthAdjust="spacing"># Calls by API</text>
<line x1="2700.0" y1="1475.5" x2="2717.5" y2="1458.0" stroke="#4a4c54" stroke-width="2.4" stroke-linecap="round"/>
<line x1="2710.0" y1="1475.5" x2="2717.5" y2="1468.0" stroke="#4a4c54" stroke-width="2.4" stroke-linecap="round"/>
<path d="M1497.13 1217.20 A65.5 65.5 0 1 1 1622.07 1217.20 L1602.04 1210.88 A44.5 44.5 0 1 0 1517.16 1210.88 Z" fill="#222529"/>
<path d="M1497.13 1217.20 A65.5 65.5 0 0 1 1576.95 1134.34 L1571.39 1154.59 A44.5 44.5 0 0 0 1517.16 1210.88 Z" fill="#86bf72"/>
<text x="1547.65" y="1218.8" font-size="38" fill="#7dbf6e" stroke="#7dbf6e" stroke-width="0.6" textLength="18.80" lengthAdjust="spacing">9</text>
<text x="1493.60" y="1261.5" font-size="32" fill="#ccccdc" stroke="#ccccdc" stroke-width="0.5" textLength="130.60" lengthAdjust="spacing">/api/chat</text>
<path d="M1826.33 1217.20 A65.5 65.5 0 1 1 1951.27 1217.20 L1931.24 1210.88 A44.5 44.5 0 1 0 1846.36 1210.88 Z" fill="#222529"/>
<text x="1877.45" y="1218.8" font-size="38" fill="#7dbf6e" stroke="#7dbf6e" stroke-width="0.6" textLength="16.20" lengthAdjust="spacing">1</text>
<text x="1808.15" y="1261.5" font-size="32" fill="#ccccdc" stroke="#ccccdc" stroke-width="0.5" textLength="161.20" lengthAdjust="spacing">/api/create</text>
<path d="M2155.53 1217.20 A65.5 65.5 0 1 1 2280.47 1217.20 L2260.44 1210.88 A44.5 44.5 0 1 0 2175.56 1210.88 Z" fill="#222529"/>
<text x="2206.65" y="1218.8" font-size="38" fill="#7dbf6e" stroke="#7dbf6e" stroke-width="0.6" textLength="16.20" lengthAdjust="spacing">1</text>
<text x="2138.05" y="1261.5" font-size="32" fill="#ccccdc" stroke="#ccccdc" stroke-width="0.5" textLength="160.40" lengthAdjust="spacing">/api/delete</text>
<path d="M2484.73 1217.20 A65.5 65.5 0 1 1 2609.67 1217.20 L2589.64 1210.88 A44.5 44.5 0 1 0 2504.76 1210.88 Z" fill="#222529"/>
<text x="2535.85" y="1218.8" font-size="38" fill="#7dbf6e" stroke="#7dbf6e" stroke-width="0.6" textLength="16.20" lengthAdjust="spacing">1</text>
<text x="2462.60" y="1261.5" font-size="32" fill="#ccccdc" stroke="#ccccdc" stroke-width="0.5" textLength="170.00" lengthAdjust="spacing">/api/embed</text>
<path d="M1497.13 1396.00 A65.5 65.5 0 1 1 1622.07 1396.00 L1602.04 1389.68 A44.5 44.5 0 1 0 1517.16 1389.68 Z" fill="#222529"/>
<path d="M1497.13 1396.00 A65.5 65.5 0 1 1 1622.07 1396.00 L1602.04 1389.68 A44.5 44.5 0 1 0 1517.16 1389.68 Z" fill="#e05864"/>
<text x="1535.60" y="1397.6" font-size="38" fill="#e05864" stroke="#e05864" stroke-width="0.6" textLength="44.00" lengthAdjust="spacing">15</text>
<text x="1459.60" y="1440.3" font-size="32" fill="#ccccdc" stroke="#ccccdc" stroke-width="0.5" textLength="200.60" lengthAdjust="spacing">/api/generate</text>
<path d="M1826.33 1396.00 A65.5 65.5 0 1 1 1951.27 1396.00 L1931.24 1389.68 A44.5 44.5 0 1 0 1846.36 1389.68 Z" fill="#222529"/>
<text x="1877.45" y="1397.6" font-size="38" fill="#7dbf6e" stroke="#7dbf6e" stroke-width="0.6" textLength="16.20" lengthAdjust="spacing">1</text>
<text x="1829.00" y="1440.3" font-size="32" fill="#ccccdc" stroke="#ccccdc" stroke-width="0.5" textLength="119.80" lengthAdjust="spacing">/api/pull</text>
<path d="M2155.53 1396.00 A65.5 65.5 0 1 1 2280.47 1396.00 L2260.44 1389.68 A44.5 44.5 0 1 0 2175.56 1389.68 Z" fill="#222529"/>
<text x="2206.65" y="1397.6" font-size="38" fill="#7dbf6e" stroke="#7dbf6e" stroke-width="0.6" textLength="16.20" lengthAdjust="spacing">1</text>
<text x="2144.90" y="1440.3" font-size="32" fill="#ccccdc" stroke="#ccccdc" stroke-width="0.5" textLength="145.00" lengthAdjust="spacing">/api/show</text>
<path d="M2484.73 1396.00 A65.5 65.5 0 1 1 2609.67 1396.00 L2589.64 1389.68 A44.5 44.5 0 1 0 2504.76 1389.68 Z" fill="#222529"/>
<text x="2535.85" y="1397.6" font-size="38" fill="#7dbf6e" stroke="#7dbf6e" stroke-width="0.6" textLength="16.20" lengthAdjust="spacing">1</text>
<text x="2482.10" y="1440.3" font-size="32" fill="#ccccdc" stroke="#ccccdc" stroke-width="0.5" textLength="130.00" lengthAdjust="spacing">/api/tags</text>
</svg></body></html>
